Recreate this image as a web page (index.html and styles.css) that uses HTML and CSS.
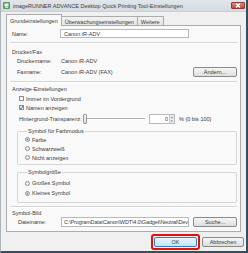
FILE: index.html
```html
<!DOCTYPE html>
<html lang="de">
<head>
    <meta charset="UTF-8">
    <title>imageRUNNER ADVANCE Desktop Quick Printing Tool-Einstellungen</title>
    <link rel="stylesheet" href="styles.css">
</head>
<body>
    <div class="window">
        <!-- Titelleiste -->
        <div class="titlebar">
            <svg class="app-icon" width="7" height="7" viewBox="0 0 7 7">
                <rect x="0" y="0" width="7" height="7" rx="1" fill="#5a9a6a"/>
                <rect x="1.5" y="1.5" width="4" height="3" fill="#e8f2ea"/>
                <rect x="2" y="5" width="3" height="1" fill="#cfe3d4"/>
            </svg>
            <span class="title">imageRUNNER ADVANCE Desktop Quick Printing Tool-Einstellungen</span>
            <span class="close">
                <svg width="6" height="5" viewBox="0 0 6 5">
                    <path d="M1 0.5 L5 4.5 M5 0.5 L1 4.5" stroke="#fff" stroke-width="1.2"/>
                </svg>
            </span>
        </div>

        <!-- Registerkarten -->
        <div class="tabs">
            <div class="tab active">Grundeinstellungen</div>
            <div class="tab">Überwachungseinstellungen</div>
            <div class="tab">Weitere</div>
        </div>

        <div class="panel">
            <div class="row name-row">
                <span class="label">Name:</span>
                <span class="textbox name-box">Canon iR-ADV</span>
            </div>
            <div class="sep"></div>

            <div class="heading">Drucker/Fax</div>
            <div class="row info">
                <span class="label sub">Druckername:</span>
                <span>Canon iR-ADV</span>
            </div>
            <div class="row info fax">
                <span class="label sub">Faxname:</span>
                <span class="grow">Canon iR-ADV (FAX)</span>
                <span class="btn change">Ändern...</span>
            </div>
            <div class="sep sep-2"></div>

            <div class="heading heading-2">Anzeige-Einstellungen</div>
            <div class="row check first">
                <span class="box"></span>
                <span>Immer im Vordergrund</span>
            </div>
            <div class="row check">
                <span class="box checked">
                    <svg width="5" height="5" viewBox="0 0 5 5"><path d="M0.8 2.6 L2 3.8 L4.3 0.8" stroke="#2b4f8a" stroke-width="0.9" fill="none"/></svg>
                </span>
                <span>Namen anzeigen</span>
            </div>
            <div class="row slider-row">
                <span class="slider-label">Hintergrund-Transparenz:</span>
                <span class="slider"><span class="thumb"></span><span class="track"></span></span>
                <span class="spin"><span class="spin-value">0</span><span class="arrows"><span>&#9652;</span><span>&#9662;</span></span></span>
                <span class="unit">% (0 bis 100)</span>
            </div>

            <fieldset class="group group-1">
                <legend>Symbol für Farbmodus</legend>
                <div class="row radio"><span class="dot on"></span><span>Farbe</span></div>
                <div class="row radio"><span class="dot"></span><span>Schwarzweiß</span></div>
                <div class="row radio"><span class="dot"></span><span>Nicht anzeigen</span></div>
            </fieldset>

            <fieldset class="group group-2">
                <legend>Symbolgröße</legend>
                <div class="row radio"><span class="dot"></span><span>Großes Symbol</span></div>
                <div class="row radio"><span class="dot on"></span><span>Kleines Symbol</span></div>
            </fieldset>
            <div class="sep sep-3"></div>

            <div class="heading heading-3">Symbol-Bild</div>
            <div class="row file-row">
                <span class="label file-label">Dateiname:</span>
                <span class="textbox file-box">C:\ProgramData\Canon\WDT\4.0\Gadget\Neutral\Dev</span>
                <span class="btn search">Suche...</span>
            </div>
        </div>

        <div class="footer">
            <span class="highlight"><span class="btn ok">OK</span></span>
            <span class="btn cancel">Abbrechen</span>
        </div>
    </div>
</body>
</html>
```

FILE: styles.css
```css
* {
    box-sizing: border-box;
}
body {
    margin: 0;
    font-family: "Liberation Sans", Arial, sans-serif;
    font-size: 5.5px;
    color: #3a3a3a;
    background: #f0f0f0;
}
.window {
    width: 248px;
    height: 253px;
    display: flex;
    flex-direction: column;
    background: #f0f0f0;
    border-left: 1px solid #a9b4bd;
    border-right: 2px solid #34505f;
    border-bottom: 2px solid #34505f;
    overflow: hidden;
}

/* Titelleiste */
.titlebar {
    height: 12px;
    display: flex;
    align-items: center;
    padding: 0 1px 0 2px;
    background: linear-gradient(#e2e6ea, #d4dae0);
    border-bottom: 1px solid #c9cfd5;
}
.app-icon {
    margin-right: 3px;
}
.title {
    flex: 1;
    color: #3a3a3a;
    white-space: nowrap;
}
.close {
    width: 14px;
    height: 7px;
    display: flex;
    align-items: center;
    justify-content: center;
    background: linear-gradient(#e08a80, #c2463c);
    border: 1px solid #8e3a33;
    border-radius: 1px;
}

/* Registerkarten */
.tabs {
    display: flex;
    align-items: flex-end;
    height: 14px;
    padding-left: 5px;
    margin-bottom: -1px;
}
.tab {
    height: 10px;
    padding: 0 3px;
    display: flex;
    align-items: center;
    border: 1px solid #acacac;
    border-bottom: none;
    border-left: none;
    background: linear-gradient(#f2f2f2, #e4e4e4);
}
.tab.active {
    height: 12px;
    border-left: 1px solid #acacac;
    background: #f9f9f9;
    position: relative;
    z-index: 1;
}

.panel {
    height: 207px;
    margin: 0 5px;
    padding: 0 3px 0 5px;
    border: 1px solid #acacac;
    background: #f9f9f9;
    display: flex;
    flex-direction: column;
}
.row {
    display: flex;
    align-items: center;
}
.label {
    width: 48px;
    flex-shrink: 0;
}
.textbox {
    height: 9px;
    display: flex;
    align-items: center;
    padding: 0 3px;
    background: #fff;
    border: 1px solid #b5b8be;
    white-space: nowrap;
    overflow: hidden;
}
.name-row {
    margin-top: 3px;
    height: 9px;
}
.name-box {
    width: 129px;
}
.sep {
    height: 2px;
    margin: 4px 0 0 -2px;
    border-top: 1px solid #d5d5d5;
    border-bottom: 1px solid #fff;
}
.heading {
    height: 8px;
    margin-top: 4px;
    display: flex;
    align-items: center;
}
.info {
    height: 8px;
    margin-top: 1px;
    padding-left: 5px;
}
.label.sub {
    width: 44px;
}
.info.fax {
    height: 10px;
    margin-top: 2px;
}
.grow {
    flex: 1;
}
.btn {
    height: 10px;
    display: flex;
    align-items: center;
    justify-content: center;
    border: 1px solid #8a8a8a;
    border-radius: 2px;
    background: linear-gradient(#f6f6f6, #dedede);
    color: #3a3a3a;
}
.change {
    width: 44px;
}
.sep-2 {
    margin-top: 4px;
}
.heading-2 {
    margin-top: 2px;
}
.check {
    height: 9px;
    padding-left: 7px;
}
.check.first {
    margin-top: 1px;
}
.box {
    width: 5px;
    height: 5px;
    margin-right: 2px;
    border: 1px solid #8f8f8f;
    background: linear-gradient(#e8e8e8, #fff);
    display: flex;
    align-items: center;
    justify-content: center;
}
.box svg {
    flex-shrink: 0;
}
.slider-row {
    height: 10px;
    margin-top: 2px;
    padding-left: 7px;
}
.slider-label {
    width: 64px;
    flex-shrink: 0;
}
.slider {
    width: 62px;
    height: 10px;
    display: flex;
    align-items: center;
}
.thumb {
    width: 4px;
    height: 10px;
    border: 1px solid #9a9a9a;
    border-radius: 1px;
    background: linear-gradient(#f4f4f4, #dcdcdc);
}
.track {
    flex: 1;
    height: 2px;
    border-top: 1px solid #b0b0b0;
    border-bottom: 1px solid #fff;
}
.spin {
    width: 26px;
    height: 10px;
    margin-left: 4px;
    display: flex;
    background: #fff;
    border: 1px solid #b5b8be;
}
.spin-value {
    flex: 1;
    text-align: right;
    padding-right: 1px;
    line-height: 8px;
}
.arrows {
    width: 5px;
    display: flex;
    flex-direction: column;
    font-size: 3px;
    line-height: 4px;
    text-align: center;
    color: #444;
    background: #eaeaea;
    border-left: 1px solid #c8c8c8;
}
.unit {
    margin-left: 4px;
}

/* Gruppenfelder */
.group {
    margin: 3px 0 0 5px;
    padding: 0 0 2px 7px;
    border: 1px solid #d5d5d5;
    border-radius: 2px;
    min-width: 0;
}
.group legend {
    height: 8px;
    padding: 0 1px;
    margin-left: 2px;
    line-height: 8px;
}
.radio {
    height: 9px;
}
.group-2 {
    padding-top: 2px;
    padding-bottom: 4px;
}
.group-2 .radio {
    height: 10px;
}
.dot {
    width: 5px;
    height: 5px;
    margin-right: 2px;
    border-radius: 50%;
    border: 1px solid #8f8f8f;
    background: radial-gradient(#fff, #dedede);
}
.dot.on {
    background: radial-gradient(#3f8fd6 40%, #e6eef6 50%);
}
.sep-3 {
    margin-top: 3px;
}
.heading-3 {
    margin-top: 1px;
}
.file-row {
    height: 10px;
    margin-top: 0;
    padding-left: 6px;
}
.file-label {
    width: 43px;
}
.file-box {
    width: 128px;
    height: 10px;
    padding: 0 2px;
    letter-spacing: -0.15px;
}
.search {
    width: 44px;
    margin-left: 4px;
}

/* Schaltflächen unten */
.footer {
    flex: 1;
    display: flex;
    align-items: center;
    justify-content: flex-end;
    padding-right: 2px;
    gap: 2px;
}
.highlight {
    padding: 1px;
    border: 2px solid #e01010;
    border-radius: 3px;
}
.ok {
    width: 43px;
    border-color: #3c7fb1;
    background: linear-gradient(#eaf6fd, #bee6fd);
}
.cancel {
    width: 42px;
}
```
